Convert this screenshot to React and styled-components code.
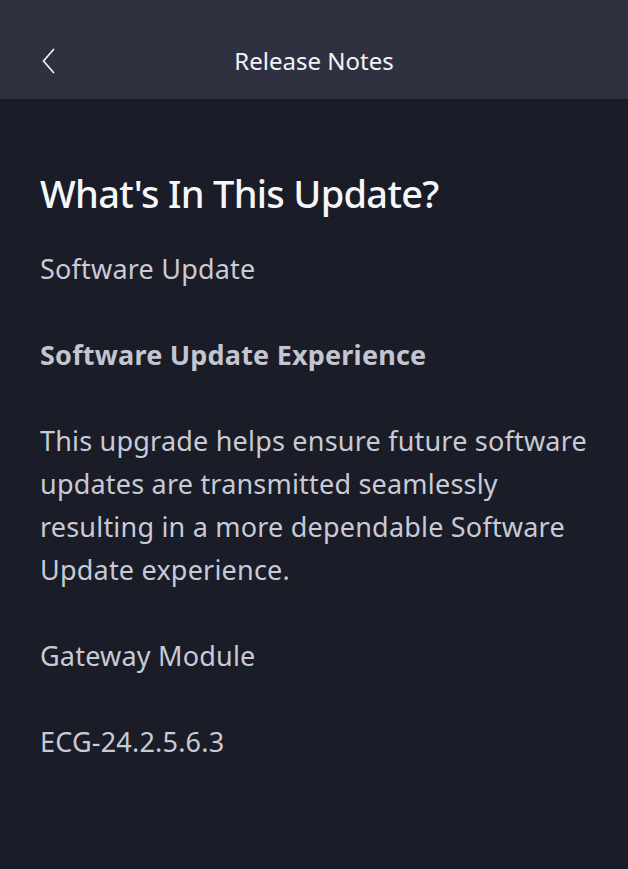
import React from 'react';
import styled, { createGlobalStyle } from 'styled-components';

const GlobalStyle = createGlobalStyle`
  html, body {
    margin: 0;
    padding: 0;
    background: #1a1c27;
  }
  body {
    font-family: 'Noto Sans', 'Liberation Sans', sans-serif;
    -webkit-font-smoothing: antialiased;
  }
`;

const blocks = [
  { text: 'Software Update' },
  { text: 'Software Update Experience', bold: true },
  {
    text: 'This upgrade helps ensure future software updates are transmitted seamlessly resulting in a more dependable Software Update experience.',
  },
  { text: 'Gateway Module' },
  { text: 'ECG-24.2.5.6.3' },
];

const App = () => {
  return (
    <Screen>
      <GlobalStyle />
      <TopBar>
        <BackButton aria-label="Back">
          <svg width="14" height="26" viewBox="0 0 14 26" fill="none">
            <path d="M11.5 1.5 L1.5 13 L11.5 24.5" stroke="#f2f3f7" strokeWidth="1.7" strokeLinecap="round" strokeLinejoin="round" />
          </svg>
        </BackButton>
        <BarTitle>Release Notes</BarTitle>
      </TopBar>
      <Content>
        <Heading>What's In This Update?</Heading>
        {blocks.map((b, i) => (
          <Paragraph key={i} bold={b.bold}>
            {b.text}
          </Paragraph>
        ))}
      </Content>
    </Screen>
  );
};

export default App;

const Screen = styled.div`
  min-height: 869px;
  background: #1a1c27;
`;

const TopBar = styled.header`
  position: relative;
  height: 99px;
  background: #2f3140;
  display: flex;
  align-items: center;
  justify-content: center;
`;

const BackButton = styled.button`
  position: absolute;
  left: 42px;
  top: 48px;
  background: none;
  border: 0;
  padding: 0;
  width: 14px;
  height: 26px;
  display: flex;
  cursor: pointer;
`;

const BarTitle = styled.h1`
  margin: 0;
  padding-top: 21px;
  color: #f2f3f7;
  font-size: 24px;
  font-weight: 400;
  letter-spacing: 0;
`;

const Content = styled.main`
  padding: 64px 36px 40px 40px;
  display: flex;
  flex-direction: column;
`;

const Heading = styled.h2`
  margin: 0 0 24px;
  color: #f5f6fa;
  font-size: 38px;
  font-weight: 500;
  line-height: 60px;
  letter-spacing: -0.7px;
`;

const Paragraph = styled.p`
  margin: 0 0 43px;
  color: ${(p) => (p.bold ? '#c3c5d0' : '#c8cad5')};
  font-size: 27px;
  font-weight: ${(p) => (p.bold ? 700 : 400)};
  line-height: 43px;
  letter-spacing: 0.2px;
`;
